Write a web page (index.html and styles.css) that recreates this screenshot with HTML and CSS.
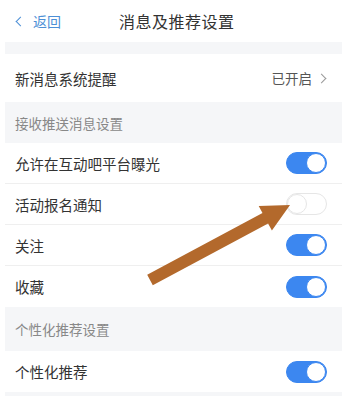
FILE: index.html
```html
<!DOCTYPE html>
<html lang="zh-CN">

<head>
    <meta charset="UTF-8">
    <meta name="viewport" content="width=device-width, initial-scale=1.0">
    <title>消息及推荐设置</title>
    <link rel="stylesheet" href="styles.css">
</head>

<body>
    <div id="page">
        <div class="top-bar">
            <a class="back"><span class="back-arrow"></span>返回</a>
            <h1 class="title">消息及推荐设置</h1>
        </div>
        <div class="gap"></div>
        <ul class="list">
            <li class="row row-tall">
                <span class="label">新消息系统提醒</span>
                <span class="value">已开启<i class="chevron"></i></span>
            </li>
        </ul>
        <div class="section">接收推送消息设置</div>
        <ul class="list">
            <li class="row">
                <span class="label">允许在互动吧平台曝光</span>
                <span class="switch on"></span>
            </li>
            <li class="row">
                <span class="label">活动报名通知</span>
                <span class="switch"></span>
            </li>
            <li class="row">
                <span class="label">关注</span>
                <span class="switch on"></span>
            </li>
            <li class="row">
                <span class="label">收藏</span>
                <span class="switch on"></span>
            </li>
        </ul>
        <div class="section section-tall">个性化推荐设置</div>
        <ul class="list">
            <li class="row">
                <span class="label">个性化推荐</span>
                <span class="switch on"></span>
            </li>
        </ul>
        <div class="gap"></div>

        <svg class="pointer" width="342" height="396" viewBox="0 0 342 396">
            <polygon fill="#b3692c"
                points="147.2,274.7 262.5,212.9 258.7,205.9 290,205 271.9,230.5 268.1,223.5 152.8,285.3" />
        </svg>
    </div>
</body>

</html>
```

FILE: styles.css
```css
* {
    padding: 0;
    margin: 0;
    box-sizing: border-box;
}

ul {
    list-style: none;
}

body {
    background: #fff;
    font-family: "Noto Sans CJK SC", "Noto Sans", sans-serif;
    color: #333;
}

#page {
    position: relative;
    width: 342px;
    height: 396px;
    overflow: hidden;
    padding-left: 5px;
}

.top-bar {
    height: 42px;
    display: flex;
    align-items: center;
    position: relative;
}

.back {
    display: flex;
    align-items: center;
    padding-left: 12px;
    font-size: 14px;
    color: #4d8fd6;
}

.back-arrow {
    width: 7px;
    height: 7px;
    border-left: 1.5px solid #4d8fd6;
    border-bottom: 1.5px solid #4d8fd6;
    transform: rotate(45deg);
    margin-right: 9px;
}

.title {
    position: absolute;
    left: 114px;
    font-size: 16px;
    font-weight: normal;
    color: #333;
    letter-spacing: 0.5px;
}

.gap {
    height: 12px;
    background: #f5f6f8;
}

.list {
    background: #fff;
}

.row {
    height: 41px;
    display: flex;
    align-items: center;
    justify-content: space-between;
    padding: 0 15px 0 10px;
    border-bottom: 1px solid #efefef;
}

.row:last-child {
    border-bottom: none;
}

.row-tall {
    height: 48px;
}

.label {
    font-size: 14.5px;
    color: #333;
}

.value {
    display: flex;
    align-items: center;
    font-size: 13.5px;
    color: #555;
}

.chevron {
    width: 7px;
    height: 7px;
    border-top: 1px solid #999;
    border-right: 1px solid #999;
    transform: rotate(45deg);
    margin-left: 6px;
    margin-right: 2px;
}

.section {
    height: 41px;
    background: #f5f6f8;
    padding-left: 10px;
    display: flex;
    align-items: center;
    font-size: 13.5px;
    color: #888;
}

.section-tall {
    height: 44px;
}

.switch {
    width: 41px;
    height: 22px;
    border-radius: 11px;
    border: 1px solid #e6e6e6;
    background: #fff;
    position: relative;
}

.switch::after {
    content: "";
    position: absolute;
    top: 0;
    left: 0;
    width: 20px;
    height: 20px;
    border-radius: 50%;
    background: #fff;
    border: 1px solid #e6e6e6;
    box-sizing: border-box;
}

.switch.on {
    background: #3c87f0;
    border-color: #3c87f0;
}

.switch.on::after {
    left: auto;
    right: 0;
    border-color: #3c87f0;
}

.pointer {
    position: absolute;
    left: 0;
    top: 0;
    pointer-events: none;
}
```
